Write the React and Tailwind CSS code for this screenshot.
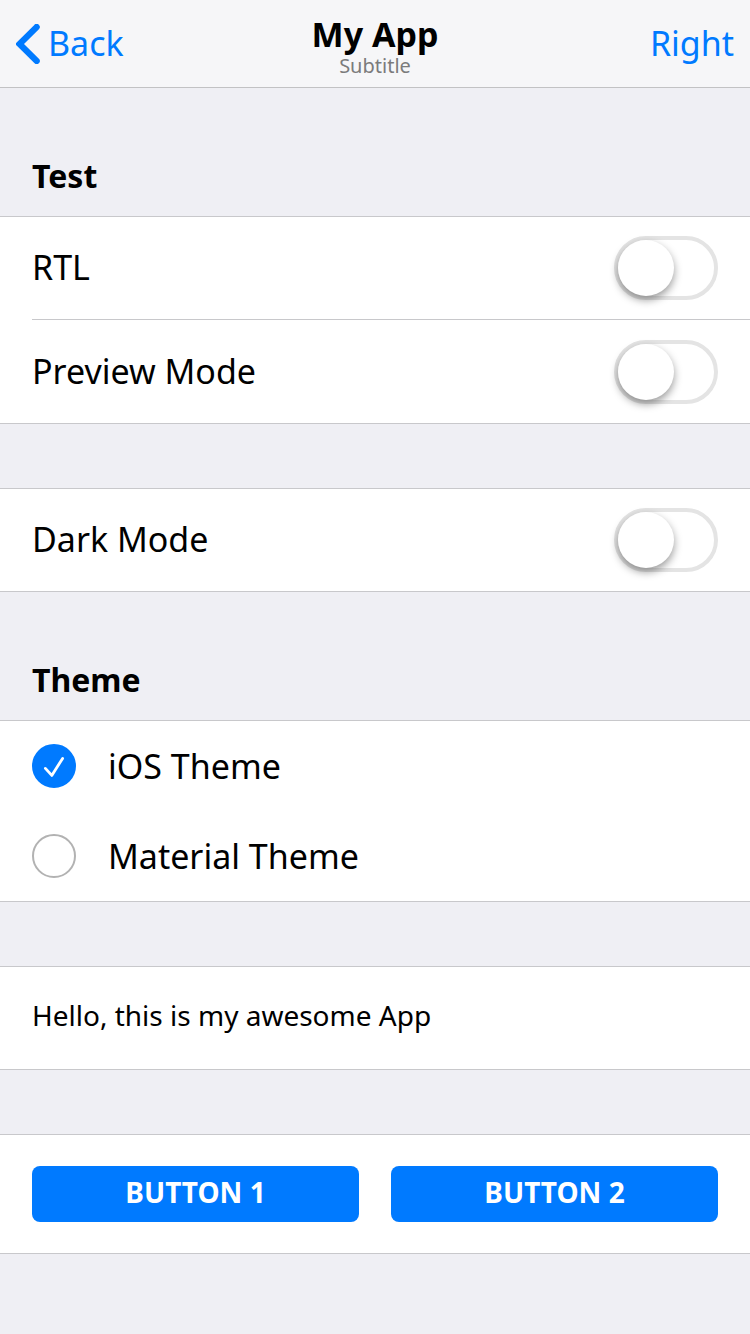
import { useState } from "react";

function BlockTitle({ children }) {
  return <h2 className="mt-16 mb-4 px-8 text-[32px] leading-12 font-bold">{children}</h2>;
}

function Panel({ className = "", children }) {
  return (
    <section className={`bg-white shadow-[inset_0_1px_#c8c8cb,inset_0_-1px_#c8c8cb] ${className}`}>
      {children}
    </section>
  );
}

function ToggleRow({ label, divided, checked, onChange }) {
  return (
    <label className="block cursor-pointer pl-8">
      <span className={`flex items-center justify-between py-5 pr-8 ${divided ? "shadow-[inset_0_-1px_#c8c8cb]" : ""}`}>
        <span className="pb-0.5 text-[34px] leading-[52px]">{label}</span>
        <input
          type="checkbox"
          role="switch"
          checked={checked}
          onChange={(e) => onChange(e.target.checked)}
          className="h-16 w-26 shrink-0 appearance-none rounded-full border-4 border-[#e4e4e4] bg-white before:block before:size-14 before:rounded-full before:bg-white before:shadow-[0_4px_8px_rgba(0,0,0,0.4)] checked:border-[#35c759] checked:bg-[#35c759] checked:before:ml-10"
        />
      </span>
    </label>
  );
}

function RadioRow({ label, value, selected, onSelect }) {
  const active = value === selected;
  return (
    <label className="flex h-[90px] cursor-pointer items-center gap-8 px-8">
      <span className="grid size-11 shrink-0 place-items-center">
        <input
          type="radio"
          name="theme"
          value={value}
          checked={active}
          onChange={() => onSelect(value)}
          className="col-start-1 row-start-1 size-11 appearance-none rounded-full border-2 border-[#b2b2b2] checked:border-[#007aff] checked:bg-[#007aff]"
        />
        {active && (
          <svg viewBox="0 0 44 44" className="pointer-events-none col-start-1 row-start-1 size-11" fill="none" stroke="white" strokeWidth="2.8" strokeLinecap="round" strokeLinejoin="round" aria-hidden="true">
            <path d="M13.4 24.4 L19.8 31.4 L30.6 14.4" />
          </svg>
        )}
      </span>
      <span className="text-[34px] leading-[52px]">{label}</span>
    </label>
  );
}

function SolidButton({ children }) {
  return (
    <button type="button" className="flex h-14 flex-1 items-center justify-center rounded-lg bg-[#007aff] pb-1 text-[28px] font-bold text-white uppercase">
      {children}
    </button>
  );
}

export default function App() {
  const [rtl, setRtl] = useState(false);
  const [preview, setPreview] = useState(false);
  const [dark, setDark] = useState(false);
  const [theme, setTheme] = useState("ios");

  return (
    <div dir={rtl ? "rtl" : "ltr"} className="min-h-screen bg-[#efeff4] pb-16 font-['Noto_Sans',sans-serif] text-black">
      <header className="grid h-22 grid-cols-[1fr_auto_1fr] items-center border-b border-[#c2c2c4] bg-[#f6f6f8] px-4">
        <a href="#back" className="flex items-center gap-2 justify-self-start text-[34px] leading-[50px] text-[#007aff]">
          <svg viewBox="0 0 24 40" className="h-10 w-6" fill="currentColor" aria-hidden="true">
            <path d="M0.6 18.5 L18.3 0.9 A3 3 0 0 1 22.9 5.3 L8 20 L22.9 34.7 A3 3 0 0 1 18.3 39.1 L0.6 21.5 A2.1 2.1 0 0 1 0.6 18.5 Z" />
          </svg>
          <span className="pb-0.5">Back</span>
        </a>
        <div className="pt-1 text-center">
          <h1 className="text-[34px] leading-10 font-bold">My App</h1>
          <p className="text-[20px] leading-6 text-[#7b7b7c]">Subtitle</p>
        </div>
        <a href="#right" className="justify-self-end pb-0.5 text-[34px] leading-[50px] text-[#007aff]">Right</a>
      </header>

      <main>
        <BlockTitle>Test</BlockTitle>
        <Panel>
          <ToggleRow label="RTL" divided checked={rtl} onChange={setRtl} />
          <ToggleRow label="Preview Mode" checked={preview} onChange={setPreview} />
        </Panel>
        <Panel className="mt-16">
          <ToggleRow label="Dark Mode" checked={dark} onChange={setDark} />
        </Panel>

        <BlockTitle>Theme</BlockTitle>
        <Panel className="py-px">
          <RadioRow label="iOS Theme" value="ios" selected={theme} onSelect={setTheme} />
          <RadioRow label="Material Theme" value="material" selected={theme} onSelect={setTheme} />
        </Panel>

        <Panel className="mt-16 px-8 pt-7 pb-[34px]">
          <p className="text-[28px] leading-[42px]">Hello, this is my awesome App</p>
        </Panel>

        <Panel className="mt-16 flex gap-8 p-8">
          <SolidButton>Button 1</SolidButton>
          <SolidButton>Button 2</SolidButton>
        </Panel>
      </main>
    </div>
  );
}
